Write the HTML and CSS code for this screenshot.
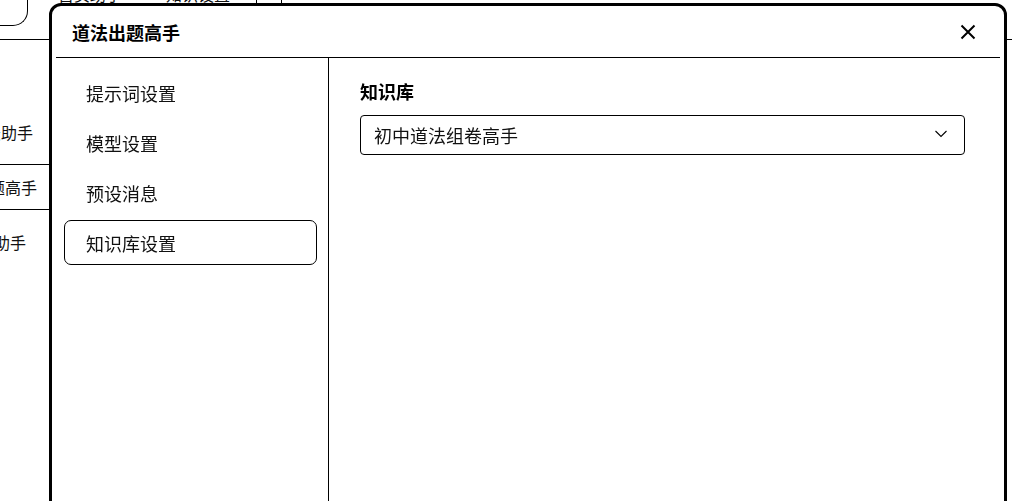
FILE: index.html
```html
<!DOCTYPE html>
<html lang="zh-CN">
<head>
<meta charset="utf-8">
<title>道法出题高手</title>
<link rel="stylesheet" href="styles.css">
</head>
<body>
<div class="page">
  <div class="topbar">
    <div class="logo-box"></div>
    <div class="top-tabs">
      <span class="top-tab tab-a">首页助手</span>
      <span class="top-tab tab-b">知识设置</span>
      <span class="top-sep sep-a"></span>
      <span class="top-sep sep-b"></span>
    </div>
  </div>
  <ul class="bg-list">
    <li class="bg-item"><span class="bg-text t1">道法助手</span></li>
    <li class="bg-item active"><span class="bg-text t2">道法出题高手</span></li>
    <li class="bg-item"><span class="bg-text t3">知识助手</span></li>
  </ul>
</div>

<div class="modal">
  <div class="modal-header">
    <h2 class="modal-title">道法出题高手</h2>
    <button class="close-btn" aria-label="关闭">
      <svg width="16" height="16" viewBox="0 0 16 16"><path d="M1.5 1.5 L14.5 14.5 M14.5 1.5 L1.5 14.5" stroke="#000" stroke-width="2" fill="none"/></svg>
    </button>
  </div>
  <div class="modal-body">
    <nav class="side-menu">
      <div class="menu-item">提示词设置</div>
      <div class="menu-item">模型设置</div>
      <div class="menu-item">预设消息</div>
      <div class="menu-item selected">知识库设置</div>
    </nav>
    <section class="content">
      <div class="field-label">知识库</div>
      <div class="select">
        <span class="select-value">初中道法组卷高手</span>
        <svg class="chevron" width="12" height="8" viewBox="0 0 12 8"><path d="M0.5 1 L6 6.5 L11.5 1" stroke="#000" stroke-width="1.1" fill="none"/></svg>
      </div>
    </section>
  </div>
</div>
</body>
</html>
```

FILE: styles.css
```css
* { box-sizing: border-box; }

html, body {
  margin: 0;
  padding: 0;
  background: #fff;
  overflow: hidden;
  height: 100%;
}

body {
  font-family: "Noto Sans CJK SC", "Noto Sans", sans-serif;
  color: #111;
}

/* ---------- background page ---------- */
.page {
  width: 100%;
}

.topbar {
  height: 40px;
  border-bottom: 1px solid #000;
  display: flex;
  align-items: flex-start;
}

.logo-box {
  width: 28px;
  height: 26px;
  border-right: 1px solid #000;
  border-bottom: 1px solid #000;
  border-bottom-right-radius: 15px;
  flex: none;
}

.top-tabs {
  display: flex;
  align-items: flex-start;
  margin-top: -14px;
  height: 17px;
}

.top-tab {
  font-size: 16px;
  line-height: 17px;
  white-space: nowrap;
}

.tab-a { margin-left: 30px; }
.tab-b { margin-left: 44px; }

.top-sep {
  width: 1px;
  height: 17px;
  background: #000;
}
.sep-a { margin-left: 26px; }
.sep-b { margin-left: 24px; }

.bg-list {
  list-style: none;
  margin: 0;
  padding: 69px 0 0 0;
  width: 200px;
  display: flex;
  flex-direction: column;
  gap: 9px;
}

.bg-item {
  height: 46px;
  display: flex;
  align-items: center;
  border-top: 1px solid transparent;
  border-bottom: 1px solid transparent;
  font-size: 16px;
  white-space: nowrap;
}

.bg-item.active {
  border-top-color: #000;
  border-bottom-color: #000;
}

.t1 { margin-left: -31px; }
.t2 { margin-left: -59px; }
.t3 { margin-left: -38px; }

/* ---------- modal ---------- */
.modal {
  position: fixed;
  left: 49px;
  top: 3px;
  width: 958px;
  height: 580px;
  background: #fff;
  border: 3px solid #000;
  border-radius: 12px;
  padding: 0 4px;
  display: flex;
  flex-direction: column;
}

.modal-header {
  height: 52px;
  flex: none;
  border-bottom: 1px solid #000;
  display: flex;
  align-items: center;
  justify-content: space-between;
  padding: 0 24px 0 16px;
}

.modal-title {
  margin: 0;
  font-size: 18px;
  font-weight: 700;
  line-height: 26px;
  color: #000;
}

.close-btn {
  border: 0;
  background: transparent;
  padding: 0;
  width: 16px;
  height: 16px;
  display: flex;
  cursor: pointer;
}

.modal-body {
  flex: 1;
  display: flex;
}

.side-menu {
  width: 273px;
  flex: none;
  border-right: 1px solid #000;
  padding: 12px 11px 0 8px;
  display: flex;
  flex-direction: column;
  gap: 5px;
}

.menu-item {
  height: 45px;
  border: 1px solid transparent;
  border-radius: 7px;
  padding-left: 21px;
  display: flex;
  align-items: center;
  font-size: 18px;
  color: #111;
}

.menu-item.selected {
  border-color: #000;
}

.content {
  flex: 1;
  padding: 20px 35px 0 31px;
}

.field-label {
  font-size: 18px;
  font-weight: 700;
  line-height: 26px;
  color: #000;
  margin-bottom: 11px;
}

.select {
  height: 40px;
  border: 1px solid #000;
  border-radius: 4px;
  display: flex;
  align-items: center;
  justify-content: space-between;
  padding: 0 17px 0 13px;
}

.select-value {
  font-size: 18px;
  color: #111;
}

.chevron {
  display: block;
  margin-top: -2px;
}
```
